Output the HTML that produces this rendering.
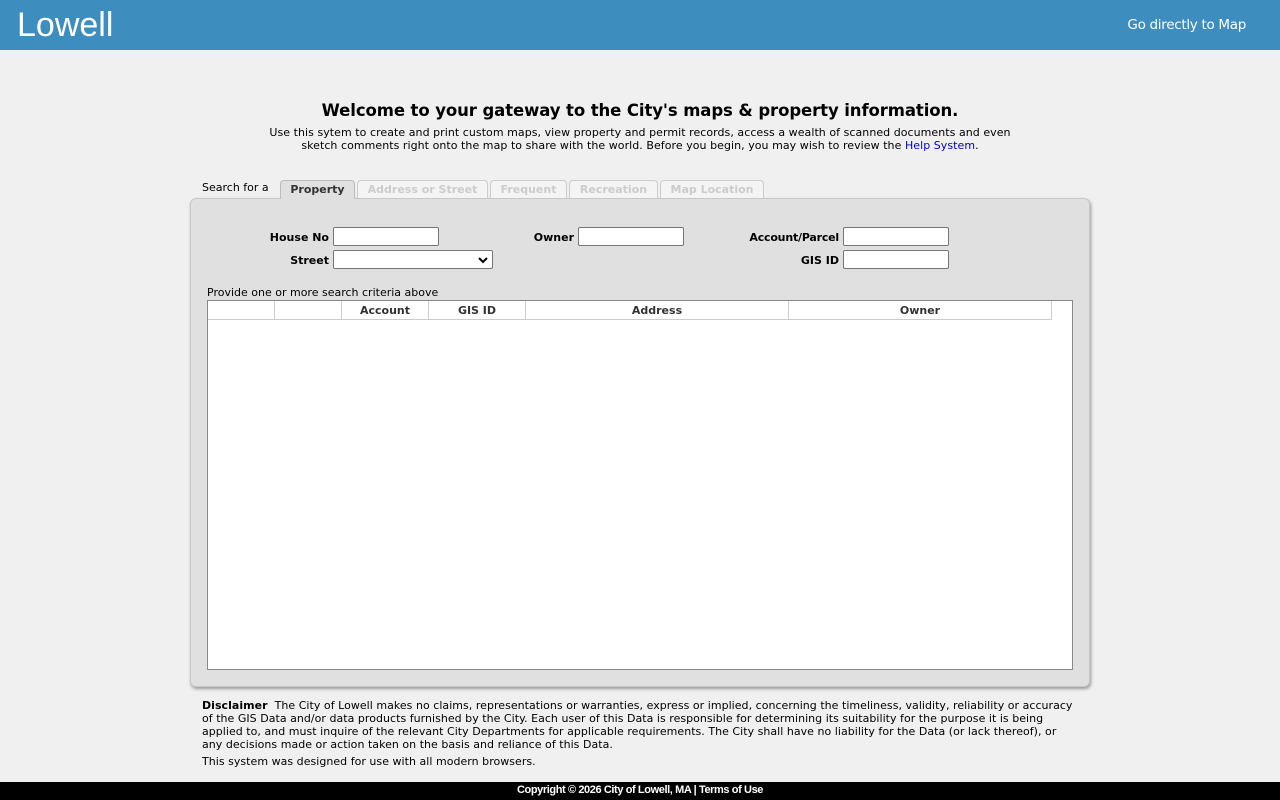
<!DOCTYPE html>
<html><head><style>
*{box-sizing:border-box}
body{margin:0;width:1280px;height:800px;background:#f0f0f0;font-family:"DejaVu Sans","Liberation Sans",sans-serif;font-size:11px;color:#000;position:relative;overflow:hidden}
.hdr{position:absolute;left:0;top:0;width:1280px;height:50px;background:#3d8dbf}
.logo{position:absolute;left:17px;top:6px;font-family:"Liberation Sans",sans-serif;font-size:34px;color:#fff}
.go{position:absolute;right:34px;top:17px;color:#fff;font-size:13.5px;font-family:"DejaVu Sans",sans-serif;letter-spacing:-0.3px}
.t{position:absolute;white-space:nowrap}
h1{position:absolute;left:0;width:1280px;top:101px;margin:0;text-align:center;font-size:16.5px;font-weight:bold;letter-spacing:-0.1px}
.intro{position:absolute;left:0;width:1280px;top:126px;text-align:center;font-size:11px;line-height:13px;letter-spacing:0.05px}
a{color:#0000cc;text-decoration:none}
.tab{position:absolute;top:180px;height:18px;border:1px solid #ccc;border-bottom:none;border-radius:4px 4px 0 0;background:#f4f4f4;color:#ccc;font-weight:bold;font-size:11px;text-align:center;line-height:17px}
.panel{position:absolute;left:190px;top:198px;width:900px;height:489px;background:#e0e0e0;border:1px solid #c8c8c8;border-radius:6px;box-shadow:1px 2px 3px #999}
.lbl{position:absolute;font-weight:bold;font-size:11px;text-align:right}
.inp{position:absolute;height:19px;background:#fff;border:1px solid #767676;border-radius:2px}
.grid{position:absolute;left:207px;top:300px;width:866px;height:370px;background:#fff;border:1px solid #888}
.th{position:absolute;top:0;height:19px;border-right:1px solid #ccc;border-bottom:1px solid #ccc;font-weight:bold;text-align:center;line-height:19px;color:#333}
.foot{position:absolute;left:0;top:782px;width:1280px;height:18px;background:#000;color:#fff;text-align:center;font-family:"Liberation Sans",sans-serif;font-size:11px;font-weight:bold;line-height:16px;letter-spacing:-0.4px}
.disc{position:absolute;left:202px;top:699px;width:900px;line-height:13px;white-space:nowrap;letter-spacing:0.03px}
</style></head><body>
<div class="hdr"><div class="logo">Lowell</div><div class="go">Go directly to Map</div></div>
<h1>Welcome to your gateway to the City's maps &amp; property information.</h1>
<div class="intro">Use this sytem to create and print custom maps, view property and permit records, access a wealth of scanned documents and even<br>sketch comments right onto the map to share with the world. Before you begin, you may wish to review the <a>Help System</a>.</div>
<div class="t" style="left:202px;top:181px">Search for a</div>
<div class="panel"></div>
<div class="tab" style="left:280px;width:75px;background:#e0e0e0;color:#333;border-color:#bbb;top:180px;height:19px">Property</div>
<div class="tab" style="left:357px;width:131px">Address or Street</div>
<div class="tab" style="left:490px;width:77px">Frequent</div>
<div class="tab" style="left:569px;width:89px">Recreation</div>
<div class="tab" style="left:660px;width:104px">Map Location</div>
<div class="lbl" style="left:250px;width:79px;top:231px">House No</div>
<div class="inp" style="left:333px;top:227px;width:106px"></div>
<div class="lbl" style="left:250px;width:79px;top:254px">Street</div>
<div class="inp" style="left:333px;top:250px;width:160px"><svg style="position:absolute;right:4px;top:6px" width="10" height="7"><path d="M1 1l4 4 4-4" stroke="#000" stroke-width="2" fill="none"/></svg></div>
<div class="lbl" style="left:500px;width:74px;top:231px">Owner</div>
<div class="inp" style="left:578px;top:227px;width:106px"></div>
<div class="lbl" style="left:700px;width:139px;top:231px;letter-spacing:-0.2px">Account/Parcel</div>
<div class="inp" style="left:843px;top:227px;width:106px"></div>
<div class="lbl" style="left:700px;width:139px;top:254px">GIS ID</div>
<div class="inp" style="left:843px;top:250px;width:106px"></div>
<div class="t" style="left:207px;top:286px">Provide one or more search criteria above</div>
<div class="grid">
<div class="th" style="left:0;width:67px"></div>
<div class="th" style="left:67px;width:67px"></div>
<div class="th" style="left:134px;width:87px">Account</div>
<div class="th" style="left:221px;width:97px">GIS ID</div>
<div class="th" style="left:318px;width:263px">Address</div>
<div class="th" style="left:581px;width:263px">Owner</div>
</div>
<div class="disc"><b>Disclaimer</b>&nbsp; The City of Lowell makes no claims, representations or warranties, express or implied, concerning the timeliness, validity, reliability or accuracy<br>of the GIS Data and/or data products furnished by the City. Each user of this Data is responsible for determining its suitability for the purpose it is being<br>applied to, and must inquire of the relevant City Departments for applicable requirements. The City shall have no liability for the Data (or lack thereof), or<br>any decisions made or action taken on the basis and reliance of this Data.<div style="margin-top:4px">This system was designed for use with all modern browsers.</div></div>
<div class="foot">Copyright © 2026 City of Lowell, MA | Terms of Use</div>
</body></html>
